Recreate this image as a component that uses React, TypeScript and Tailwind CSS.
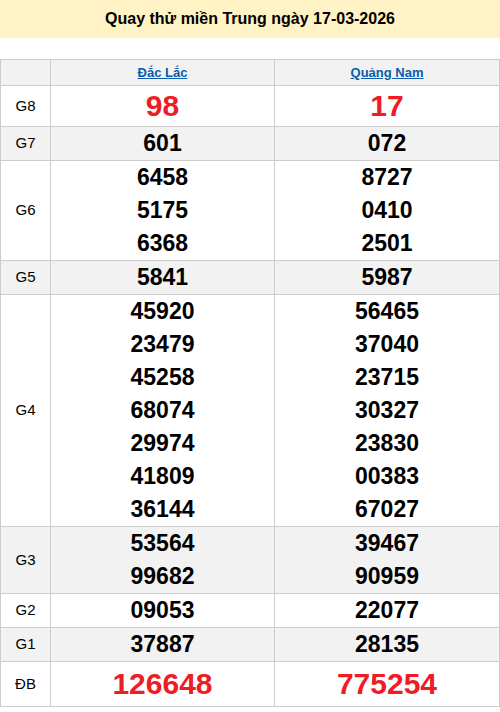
const rows: { label: string; a: string[]; b: string[]; big?: 'g8' | 'db' }[] = [
  { label: 'G8', a: ['98'], b: ['17'], big: 'g8' },
  { label: 'G7', a: ['601'], b: ['072'] },
  { label: 'G6', a: ['6458', '5175', '6368'], b: ['8727', '0410', '2501'] },
  { label: 'G5', a: ['5841'], b: ['5987'] },
  {
    label: 'G4',
    a: ['45920', '23479', '45258', '68074', '29974', '41809', '36144'],
    b: ['56465', '37040', '23715', '30327', '23830', '00383', '67027'],
  },
  { label: 'G3', a: ['53564', '99682'], b: ['39467', '90959'] },
  { label: 'G2', a: ['09053'], b: ['22077'] },
  { label: 'G1', a: ['37887'], b: ['28135'] },
  { label: 'ĐB', a: ['126648'], b: ['775254'], big: 'db' },
];

const Nums = ({ list, big }: { list: string[]; big?: 'g8' | 'db' }) => {
  if (big === 'g8')
    return <div className="text-[30px] leading-[40px] font-bold text-[#ee1c25]">{list[0]}</div>;
  if (big === 'db')
    return <div className="text-[30px] leading-[44px] font-bold text-[#ee1c25]">{list[0]}</div>;
  return (
    <>
      {list.map((n) => (
        <div key={n} className="text-[23px] leading-[33px] font-bold text-black">
          {n}
        </div>
      ))}
    </>
  );
};

export default function App() {
  return (
    <div className="w-[500px] bg-white font-['Liberation_Sans',Arial,sans-serif]">
      <div className="h-[38px] bg-[#fff2c4] flex items-center justify-center text-[16px] font-bold text-black">
        Quay thử miền Trung ngày 17-03-2026
      </div>
      <div className="h-[21px]" />
      <table className="w-[500px] border-collapse table-fixed">
        <colgroup>
          <col className="w-[50px]" />
          <col className="w-[224px]" />
          <col />
        </colgroup>
        <thead>
          <tr className="bg-[#f2f2f2] h-[26px]">
            <th className="border border-[#cccccc]" />
            <th className="border border-[#cccccc] text-[13px] font-bold">
              <a href="#" className="text-[#0b5cad] underline">Đắc Lắc</a>
            </th>
            <th className="border border-[#cccccc] text-[13px] font-bold">
              <a href="#" className="text-[#0b5cad] underline">Quảng Nam</a>
            </th>
          </tr>
        </thead>
        <tbody>
          {rows.map((r, i) => (
            <tr key={r.label} className={i % 2 === 1 ? 'bg-[#f2f2f2]' : 'bg-white'}>
              <td className="border border-[#cccccc] text-center text-[15px] text-black">{r.label}</td>
              <td className="border border-[#cccccc] text-center p-0">
                <Nums list={r.a} big={r.big} />
              </td>
              <td className="border border-[#cccccc] text-center p-0">
                <Nums list={r.b} big={r.big} />
              </td>
            </tr>
          ))}
        </tbody>
      </table>
    </div>
  );
}
